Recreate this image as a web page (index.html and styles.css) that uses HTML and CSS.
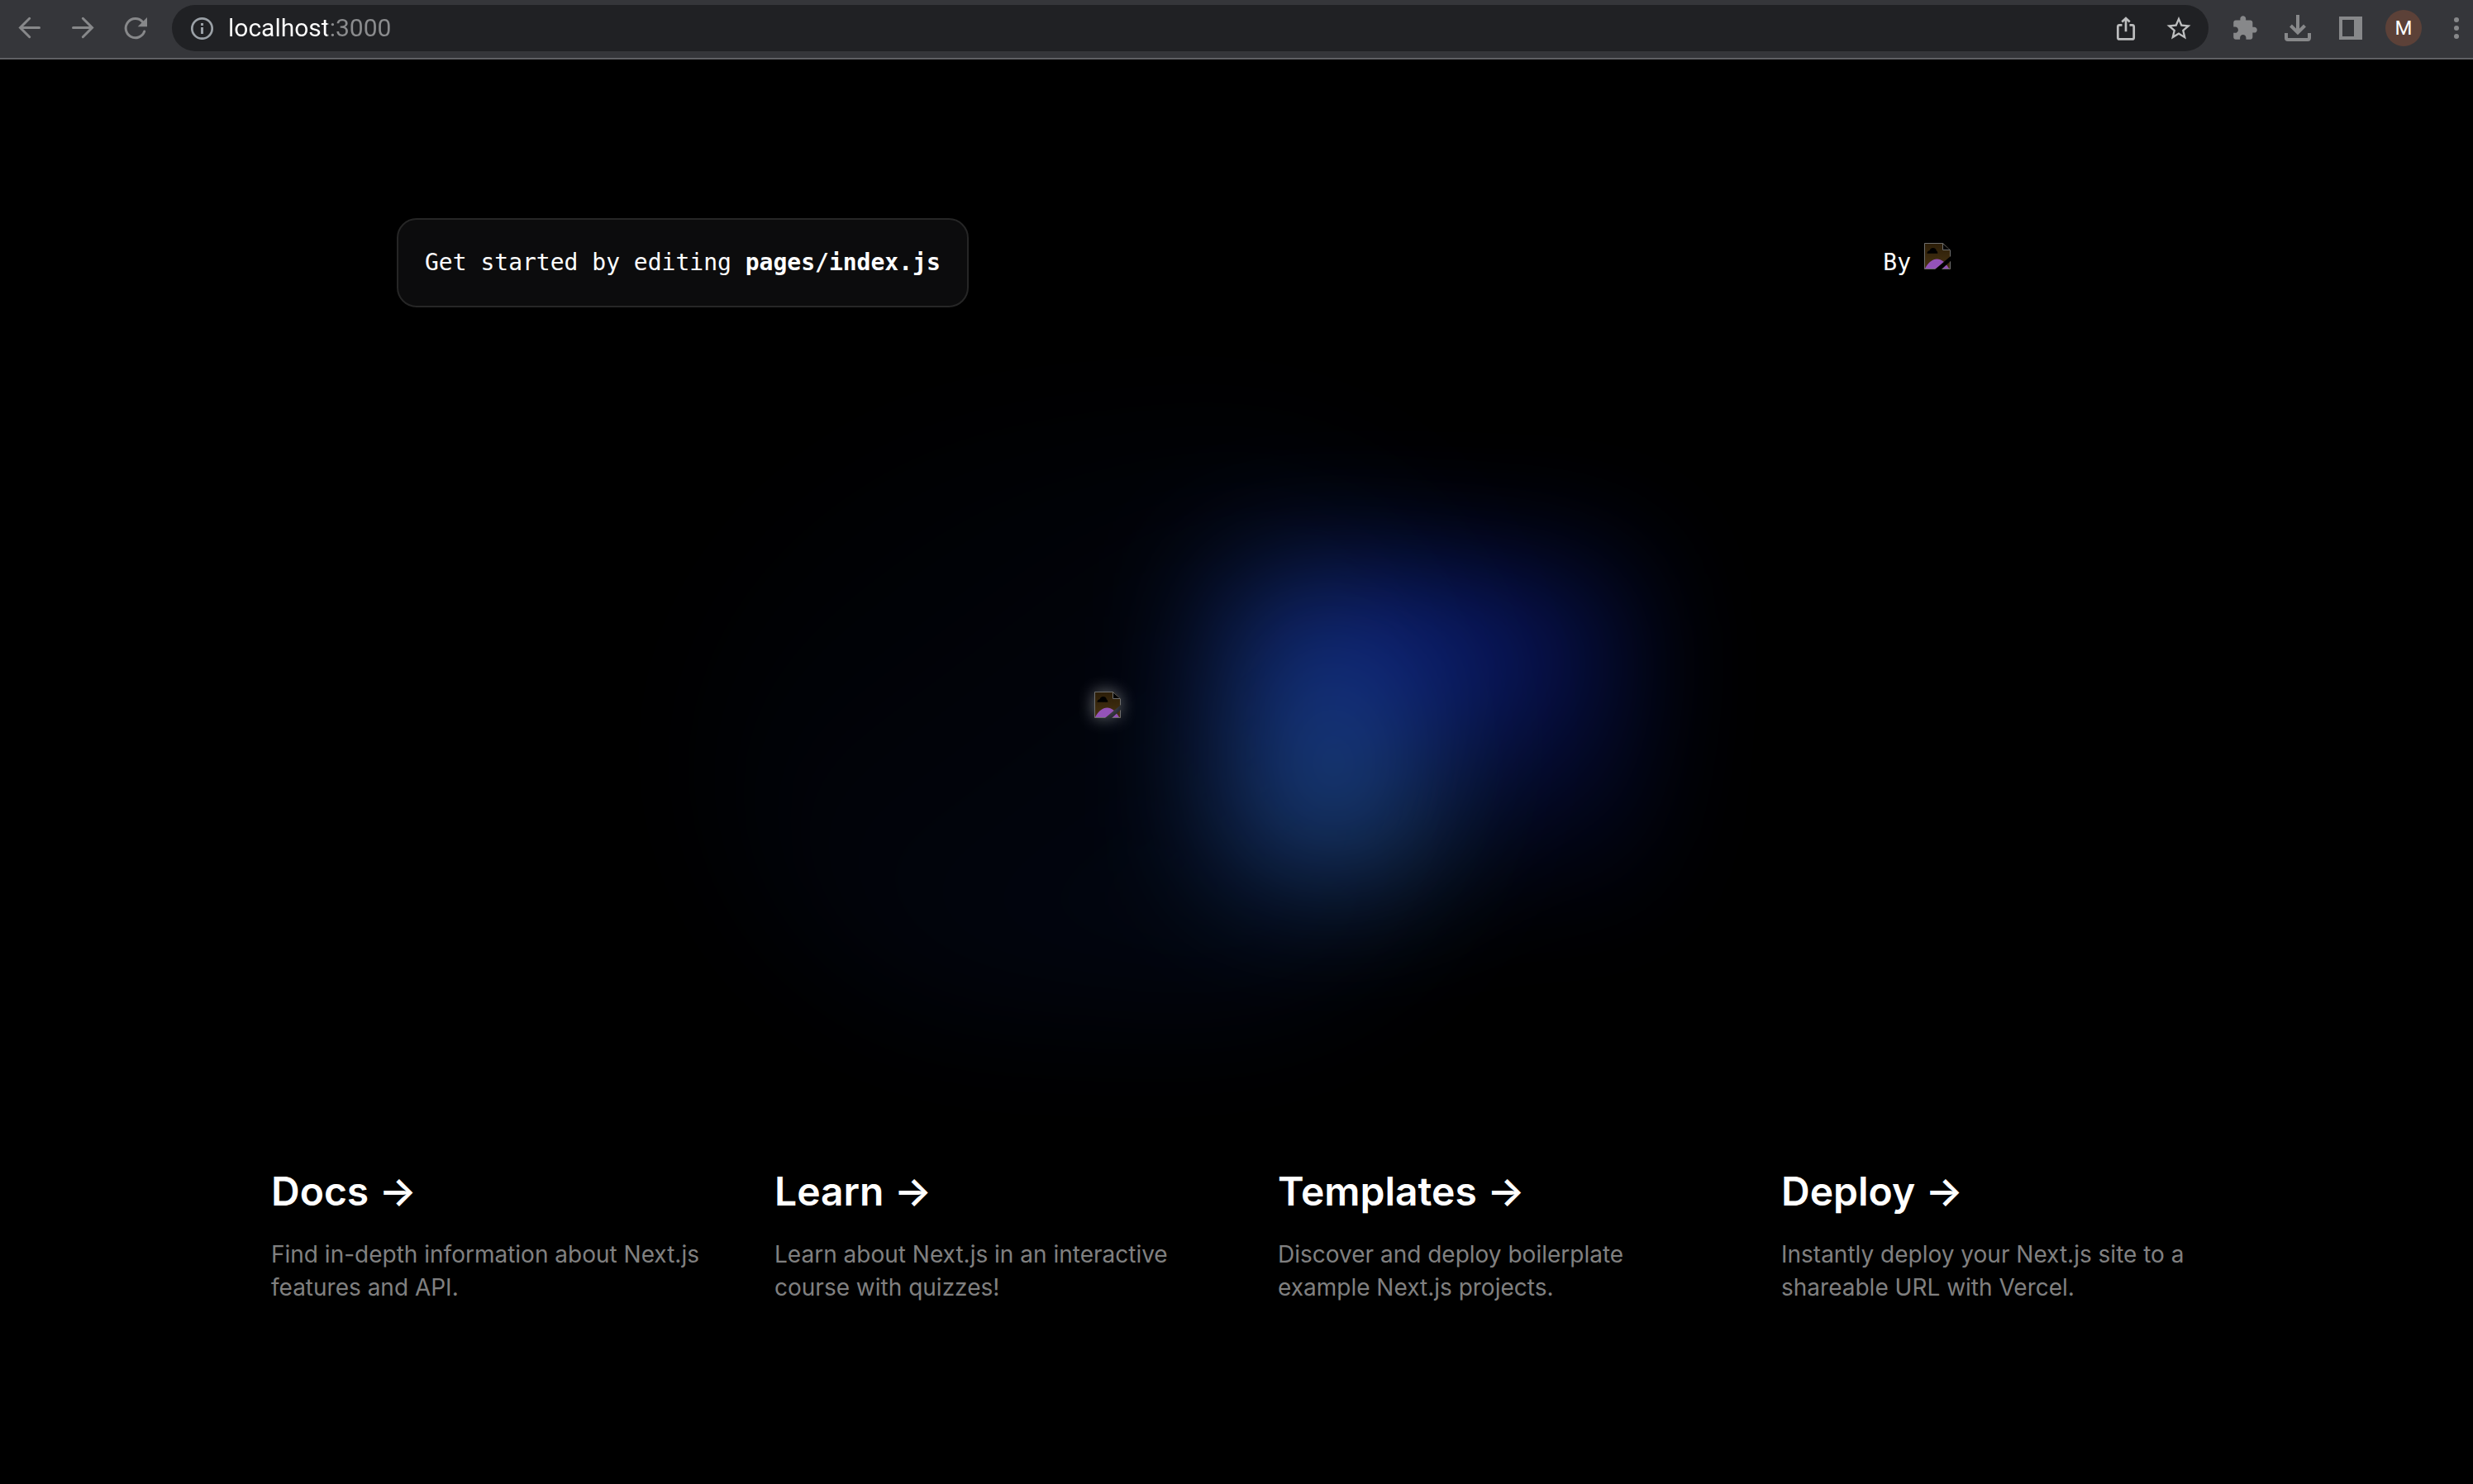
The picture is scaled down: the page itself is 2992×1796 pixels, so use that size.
FILE: index.html
```html
<!DOCTYPE html>
<html lang="en">
<head>
<meta charset="utf-8">
<title>Create Next App</title>
<link rel="stylesheet" href="styles.css">
</head>
<body>
<svg class="sprite" aria-hidden="true">
  <defs>
    <linearGradient id="sky" x1="0" y1="0" x2="0" y2="1">
      <stop offset="0" stop-color="#2b1d08"/>
      <stop offset="1" stop-color="#483413"/>
    </linearGradient>
    <clipPath id="sheet">
      <path d="M0 0H23L32 9V16L13 32H0ZM21 32L32 22V32Z"/>
    </clipPath>
    <symbol id="missing" viewBox="0 0 32 32">
      <g clip-path="url(#sheet)">
        <path fill="url(#sky)" d="M0 0H32V32H0Z"/>
        <path fill="#000" d="M3.5 12.7C3.500 10.500 5 9.300 6.500 9.300C7.300 7 9 6 10.700 6C13 6 14.600 7.500 14.800 9.500C16 10 16.400 11.500 16.300 12.700Z"/>
        <path fill="#9453b8" d="M1 31C5 23.500 10 19.600 15.500 19.600S26 24 30 31Z"/>
        <path fill="#000" d="M22 0L32 9H22Z"/>
        <path fill="none" stroke="#6d6d6d" d="M.5 .5H22.500L31.500 8.500V31.500H.5ZM22.500 .5V8.500H31.500"/>
      </g>
    </symbol>
  </defs>
</svg>

<header class="toolbar">
  <button class="tool" aria-label="Back"><svg viewBox="0 0 40 40" class="icon line"><path d="M31.500 19.500H9M19.700 8.300L8.500 19.500L19.700 30.700"/></svg></button>
  <button class="tool" aria-label="Forward"><svg viewBox="0 0 40 40" class="icon line"><path d="M8.500 19.500H31M20.300 8.300L31.500 19.500L20.300 30.700"/></svg></button>
  <button class="tool" aria-label="Reload"><svg viewBox="0 0 40 40" class="icon line"><path d="M28.500 12.500A11.600 11.600 0 1 0 30.700 24"/><path class="solid" d="M34 7V18.300H22.700Z"/></svg></button>
  <div class="omnibox">
    <button class="info" aria-label="View site information"><svg viewBox="0 0 28 28"><circle cx="14.500" cy="14.500" r="12.200" fill="none" stroke="#9aa0a6" stroke-width="2.700"/><path fill="#9aa0a6" d="M13 8H16V11H13ZM13 13H16V21H13Z"/></svg></button>
    <input class="address" type="text" aria-label="Address" value="localhost:3000" spellcheck="false">
    <button class="tool bright" aria-label="Share"><svg viewBox="0 0 40 40" class="icon"><path fill="none" stroke="currentColor" stroke-width="2.700" d="M15.500 16.300H12.300Q10.300 16.300 10.300 18.300V31.400Q10.300 33.400 12.300 33.400H27.700Q29.700 33.400 29.700 31.400V18.300Q29.700 16.300 27.700 16.300H24.500M20 24.300V9M15.300 12.500L20 8L24.700 12.500"/></svg></button>
    <button class="tool bright" aria-label="Bookmark this tab"><svg viewBox="0 0 40 40" class="icon"><path fill="currentColor" transform="translate(2.600 3) scale(1.450)" d="M22 9.240l-7.190-.62L12 2 9.190 8.630 2 9.240l5.460 4.730L5.820 21 12 17.270 18.180 21l-1.630-7.030L22 9.240zM12 15.400l-3.760 2.270 1-4.280-3.320-2.880 4.380-.38L12 6.100l1.710 4.040 4.380.38-3.320 2.880 1 4.280L12 15.400z"/></svg></button>
  </div>
  <button class="tool" aria-label="Extensions"><svg viewBox="0 0 40 40" class="icon"><path fill="currentColor" transform="translate(3.500 3.800) scale(1.360)" d="M20.500 11H19V7c0-1.100-.9-2-2-2h-4V3.500C13 2.120 11.880 1 10.500 1S8 2.120 8 3.500V5H4c-1.100 0-1.990.9-1.990 2v3.800H3.500c1.490 0 2.700 1.210 2.700 2.700s-1.210 2.700-2.700 2.700H2V20c0 1.100.9 2 2 2h3.800v-1.500c0-1.490 1.210-2.700 2.700-2.700 1.490 0 2.700 1.210 2.700 2.700V22H17c1.100 0 2-.9 2-2v-4h1.500c1.380 0 2.500-1.120 2.500-2.500S21.880 11 20.500 11z"/></svg></button>
  <button class="tool" aria-label="Downloads"><svg viewBox="0 0 40 40" class="icon"><path fill="none" stroke="currentColor" stroke-width="4" d="M20 4V25M11.500 17L20 25.500L28.500 17M6 26V32Q6 34 8 34H32Q34 34 34 32V26"/></svg></button>
  <button class="tool" aria-label="Side panel"><svg viewBox="0 0 40 40" class="icon"><path fill="currentColor" fill-rule="evenodd" d="M6 6H34V34H6ZM10 10V30H24V10Z"/></svg></button>
  <button class="tool" aria-label="Profile"><span class="avatar">M</span></button>
  <button class="tool" aria-label="Menu"><svg viewBox="0 0 40 40" class="icon"><g fill="currentColor"><circle cx="20" cy="10" r="3"/><circle cx="20" cy="20" r="3"/><circle cx="20" cy="30" r="3"/></g></svg></button>
</header>

<main class="page">
  <div class="intro">
    <p class="hint">Get started by editing <code>pages/index.js</code></p>
    <a class="by" href="#">By <svg class="vercel" role="img" aria-label="Vercel Logo"><use href="#missing" width="32" height="32"/></svg></a>
  </div>

  <div class="hero">
    <svg class="next" role="img" aria-label="Next.js Logo"><use href="#missing" width="32" height="32"/></svg>
  </div>

  <div class="cards">
    <a class="card" href="#"><h2>Docs <span>-&gt;</span></h2><p>Find in-depth information about Next.js features and API.</p></a>
    <a class="card" href="#"><h2>Learn <span>-&gt;</span></h2><p>Learn about Next.js in an interactive course with quizzes!</p></a>
    <a class="card" href="#"><h2>Templates <span>-&gt;</span></h2><p>Discover and deploy boilerplate example Next.js projects.</p></a>
    <a class="card" href="#"><h2>Deploy <span>-&gt;</span></h2><p>Instantly deploy your Next.js site to a shareable URL with Vercel.</p></a>
  </div>
</main>
</body>
</html>
```
FILE: styles.css
```css
* {
  box-sizing: border-box;
  margin: 0;
}

body {
  display: flex;
  flex-direction: column;
  min-height: 100vh;
  background: #000;
  color: #fff;
  font-family: Inter, "Liberation Sans", sans-serif;
  font-size: 28px;
  line-height: 40px;
}

a {
  color: inherit;
  text-decoration: none;
}

button {
  padding: 0;
  border: 0;
  background: none;
  color: inherit;
  font: inherit;
}

.sprite {
  position: absolute;
  width: 0;
  height: 0;
}

/* Browser toolbar */
.toolbar {
  display: flex;
  align-items: center;
  gap: 24px;
  padding: 6px 0 8px 16px;
  border-bottom: 2px solid #5f6064;
  background: #35363a;
  color: #87888a;
}

.tool {
  display: flex;
  flex: none;
  align-items: center;
  justify-content: center;
  width: 40px;
  height: 40px;
}

.icon {
  width: 40px;
  height: 40px;
}

.line {
  fill: none;
  stroke: currentColor;
  stroke-width: 3;
  stroke-linecap: round;
}

.solid {
  fill: currentColor;
  stroke: none;
}

.omnibox {
  display: flex;
  flex: 1;
  align-items: center;
  gap: 24px;
  height: 56px;
  padding: 0 16px 0 22px;
  border-radius: 28px;
  background: #202124;
}

.info {
  width: 28px;
  height: 28px;
  margin-right: -6px;
}

.info svg {
  display: block;
  width: 28px;
  height: 28px;
}

/* The host is white and the port is dimmed */
.address {
  flex: 1;
  min-width: 0;
  padding: 0;
  border: 0;
  outline: 0;
  background: linear-gradient(to right, #fff 120px, #8b8c8e 120px);
  background-clip: text;
  color: transparent;
  font: 30px/40px Roboto, sans-serif;
}

.bright {
  color: #bdbebf;
}

.avatar {
  flex: none;
  width: 44px;
  border-radius: 50%;
  background: #5c4138;
  color: #fff;
  font: 24px/44px Roboto, sans-serif;
  text-align: center;
}

/* Page */
.page {
  display: flex;
  flex: 1;
  flex-direction: column;
  align-items: center;
  justify-content: space-between;
  padding: 192px 0 184px 16px;
}

.intro {
  z-index: 1;
  display: flex;
  align-items: center;
  justify-content: space-between;
  width: 100%;
  max-width: 2048px;
  font-family: "DejaVu Sans Mono", monospace;
}

.hint {
  padding: 32px;
  border: 2px solid #262626;
  border-radius: 24px;
  background: #0c0c0d;
}

.hint code {
  font-family: inherit;
  font-weight: 700;
}

.by {
  display: flex;
  align-items: center;
  gap: 16px;
}

.vercel {
  width: 200px;
  height: 48px;
}

.hero {
  position: relative;
  display: flex;
  align-items: center;
}

/* Blurred glows behind the logo */
.hero::before,
.hero::after {
  position: absolute;
  content: "";
  filter: blur(80px);
}

.hero::before {
  width: 960px;
  height: 720px;
  border-radius: 9999px;
  background: linear-gradient(to bottom right, transparent, #1d4ed8);
  opacity: 0.1;
  transform: translateX(-50%);
}

.hero::after {
  left: 0;
  z-index: -1;
  width: 480px;
  height: 360px;
  background: conic-gradient(from 180deg at 50% 50%, #367abf, #2456be 25%, #1430d0 50%, rgb(10 30 200 / 0));
  opacity: 0.6;
  transform: translateX(160px);
}

.next {
  position: relative;
  width: 360px;
  height: 74px;
  overflow: visible;
  filter: drop-shadow(0 0 10px #ffffff70);
}

.cards {
  display: grid;
  grid-template-columns: repeat(4, 1fr);
  width: 100%;
  max-width: 2436px;
}

.card {
  padding: 32px 40px;
  border: 2px solid transparent;
  border-radius: 16px;
}

.card h2 {
  margin-bottom: 24px;
  font-size: 48px;
  font-weight: 600;
  line-height: 64px;
}

.card p {
  color: #808080;
}
```
